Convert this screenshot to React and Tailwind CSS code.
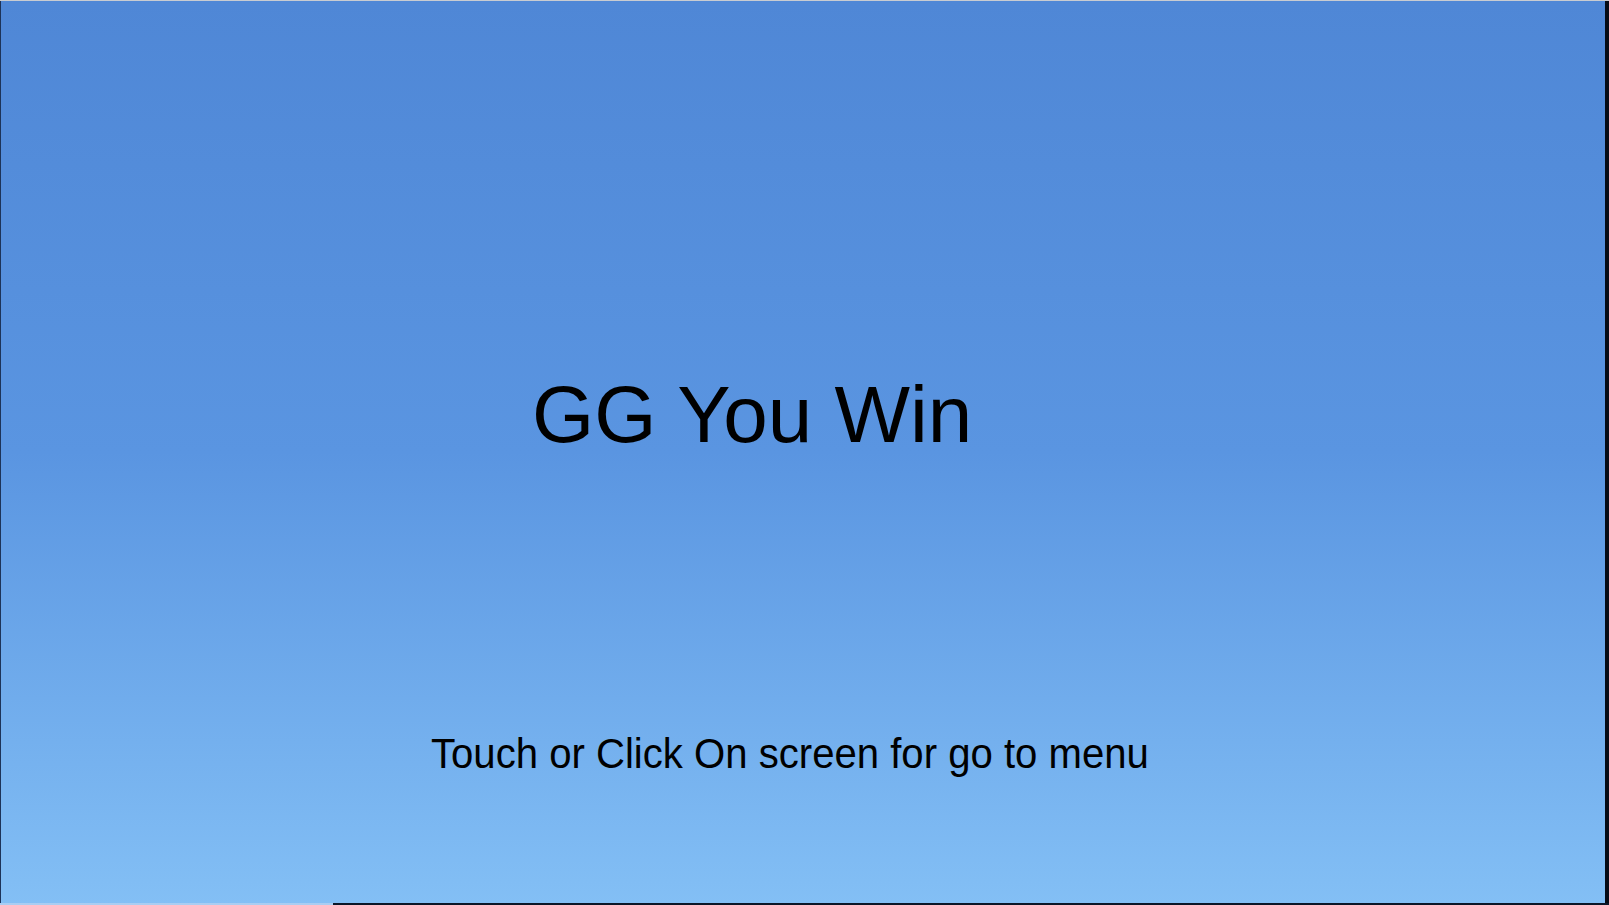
import React from "react";

export default function App() {
  return (
    <div
      className="w-[1609px] h-[905px] flex flex-col bg-[#0b1a33] overflow-hidden"
      style={{ fontFamily: '"Liberation Sans", Arial, sans-serif' }}
    >
      {/* top edge */}
      <div className="h-px w-full bg-[#c9ccd1]" />
      <div className="flex flex-1 min-h-0">
        <div className="w-px bg-[#1d3358]" />
        {/* game canvas */}
        <div className="flex-1 flex flex-col bg-gradient-to-b from-[#4f87d6] via-[#5a95e1] to-[#83bff5] text-black">
          <h1 className="mt-[374px] ml-[531px] text-[80px] leading-none font-normal whitespace-nowrap">
            GG You Win
          </h1>
          <p className="mt-[278px] ml-[430px] text-[42px] leading-none whitespace-nowrap origin-left scale-x-[0.955]">
            Touch or Click On screen for go to menu
          </p>
        </div>
        <div className="w-[4px] bg-[#050b16]" />
      </div>
      {/* bottom edge */}
      <div className="flex h-[2px]">
        <div className="w-[333px] bg-[#a9cdf2]" />
        <div className="flex-1 bg-[#0a1628]" />
      </div>
    </div>
  );
}
